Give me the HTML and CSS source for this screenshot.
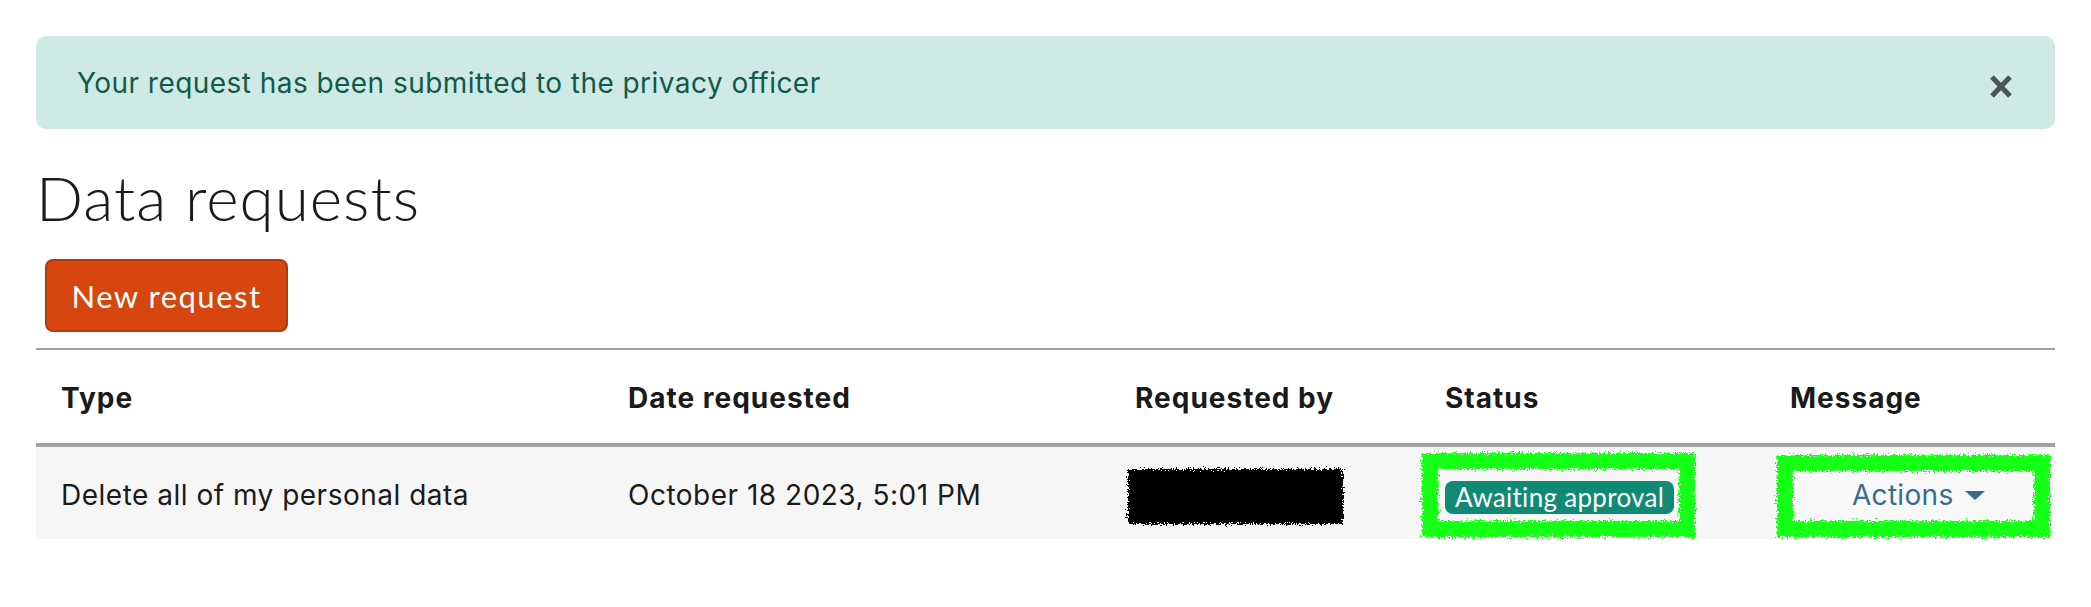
FILE: index.html
```html
<!DOCTYPE html>
<html lang="en">
<head>
<meta charset="utf-8">
<title>Data requests</title>
<link rel="stylesheet" href="styles.css">
</head>
<body>
<svg class="defs" aria-hidden="true">
  <filter id="rough" x="-10%" y="-20%" width="120%" height="140%">
    <feTurbulence type="fractalNoise" baseFrequency="0.6" numOctaves="3" seed="3" result="noise"/>
    <feDisplacementMap in="SourceGraphic" in2="noise" scale="9" xChannelSelector="R" yChannelSelector="G"/>
  </filter>
</svg>
<div class="page">
  <div class="alert">
    <span class="alert-text">Your request has been submitted to the privacy officer</span>
    <button class="close" aria-label="Close">
      <svg viewBox="0 0 24 23" width="24" height="23"><path d="M3 2 L21 21 M21 2 L3 21" stroke="#4b5654" stroke-width="5" stroke-linecap="butt" fill="none"/></svg>
    </button>
  </div>
  <h2 class="title">Data requests</h2>
  <div class="toolbar"><button class="btn-primary">New request</button></div>
  <table class="requests">
    <colgroup>
      <col class="c-type"><col class="c-date"><col class="c-by"><col class="c-status"><col class="c-msg">
    </colgroup>
    <thead>
      <tr><th>Type</th><th>Date requested</th><th>Requested by</th><th>Status</th><th>Message</th></tr>
    </thead>
    <tbody>
      <tr class="row">
        <td>Delete all of my personal data</td>
        <td>October 18 2023, 5:01 PM</td>
        <td><span class="redact"></span></td>
        <td class="td-status"><span class="mark mark-status"><span class="badge">Awaiting approval</span></span></td>
        <td class="td-msg"><span class="mark mark-actions"><span class="actions">Actions</span><span class="caret"></span></span></td>
      </tr>
    </tbody>
  </table>
</div>
</body>
</html>
```
FILE: styles.css
```css
html, body { margin: 0; background: #ffffff; }
body {
  font-family: Inter, "Liberation Sans", sans-serif;
  color: #1d2125;
}
.defs { position: absolute; width: 0; height: 0; overflow: hidden; }
.page { padding: 36px 36px 0 36px; }

.alert {
  display: flex;
  align-items: center;
  justify-content: space-between;
  height: 93px;
  box-sizing: border-box;
  padding: 0 42px 0 41px;
  background: #cfe9e4;
  border-radius: 10px;
  color: #0f5a49;
  font-size: 28px;
  letter-spacing: 0.45px;
}
.close {
  display: flex;
  padding: 0;
  margin-top: 7px;
  border: 0;
  background: transparent;
}

.title {
  margin: 31px 0 0 0;
  font-family: Lato, sans-serif;
  font-weight: 300;
  font-size: 62px;
  line-height: 1.2;
  letter-spacing: 1px;
  color: #1a1a1a;
}

.toolbar { margin-top: 25px; padding-left: 9px; display: flex; }
.btn-primary {
  width: 243px;
  height: 73px;
  box-sizing: border-box;
  background: #d6460e;
  border: 2px solid #b03a0c;
  border-radius: 8px;
  color: #ffffff;
  font-family: Lato, sans-serif;
  font-size: 31px;
  letter-spacing: 1.5px;
  padding: 0;
}

.requests {
  margin-top: 16px;
  width: 100%;
  table-layout: fixed;
  border-collapse: separate;
  border-spacing: 0;
  font-size: 28px;
}
.c-type { width: 567px; }
.c-date { width: 507px; }
.c-by { width: 310px; }
.c-status { width: 345px; }
.c-msg { width: 290px; }

.requests th {
  text-align: left;
  font-weight: 700;
  line-height: 1.2;
  letter-spacing: 1px;
  padding: 32px 25px 27px;
  border-top: 2px solid #a2a2a2;
  border-bottom: 4px solid #a2a2a2;
  color: #1a1a1a;
}
.requests .row { height: 92px; }
.requests td {
  padding: 6px 25px 0;
  line-height: 1.2;
  letter-spacing: 0.5px;
  vertical-align: middle;
  background: #f6f6f6;
  color: #1a1a1a;
}
.requests td.td-status { padding: 0 0 0 2px; }
.requests td.td-msg { padding: 0 0 0 12px; }

.redact {
  display: inline-block;
  width: 215px;
  height: 55px;
  margin-left: -7px;
  margin-top: 2px;
  vertical-align: middle;
  background: #000;
  filter: url(#rough);
}

.mark {
  position: relative;
  display: inline-flex;
  align-items: center;
  box-sizing: border-box;
  vertical-align: middle;
}
.mark::before {
  content: "";
  position: absolute;
  inset: 0;
  border: 16px solid #16ff16;
  filter: url(#rough);
}
.mark-status {
  width: 273px;
  height: 84px;
  padding: 5px 0 0 23px;
  margin-top: 4px;
}
.badge {
  display: inline-flex;
  align-items: center;
  height: 33px;
  padding: 0 10px;
  border-radius: 8px;
  background: #118a75;
  color: #ffffff;
  font-family: Lato, sans-serif;
  font-size: 26px;
  letter-spacing: 0.3px;
  line-height: 1;
}
.mark-actions {
  width: 273px;
  height: 82px;
  padding: 0 0 0 75px;
  margin-top: 6px;
  background: #f8f8f8;
}
.actions {
  color: #3a6c8c;
  font-size: 28px;
  letter-spacing: 0.3px;
}
.caret {
  width: 0;
  height: 0;
  margin-left: 12px;
  border-left: 10px solid transparent;
  border-right: 10px solid transparent;
  border-top: 9px solid #3a6c8c;
}
```
